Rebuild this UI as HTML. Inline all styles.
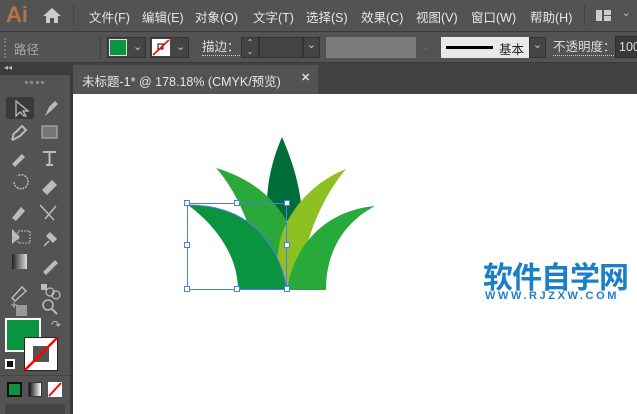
<!DOCTYPE html><html><head><meta charset="utf-8"><style>
*{margin:0;padding:0;box-sizing:border-box}
body{width:637px;height:414px;overflow:hidden;background:#535353;font-family:"Liberation Sans","Noto Sans CJK SC",sans-serif;position:relative;color:#ddd}
.a{position:absolute}
.menu span{position:absolute;top:7px;font-size:12.5px;color:#e6e6e6}
</style></head><body>
<div class="a" style="left:0;top:0;width:637px;height:31px;background:#535353"></div>
<div class="a" style="left:6px;top:2px;font-size:22px;font-weight:bold;color:#b5744a">Ai</div>
<svg class="a" style="left:42px;top:6px" width="20" height="18"><path d="M10 2L1 10h3v7h4v-5h4v5h4v-7h3z" fill="#ccc"/></svg>
<div class="a" style="left:73px;top:5px;width:1px;height:20px;background:#444"></div>
<div class="menu"><span style="left:89px">文件(F)</span><span style="left:142px">编辑(E)</span><span style="left:195px">对象(O)</span><span style="left:253px">文字(T)</span><span style="left:306px">选择(S)</span><span style="left:361px">效果(C)</span><span style="left:416px">视图(V)</span><span style="left:471px">窗口(W)</span><span style="left:530px">帮助(H)</span></div>
<div class="a" style="left:584px;top:5px;width:1px;height:20px;background:#444"></div>
<div class="a" style="left:596px;top:10px;width:6px;height:11px;background:#ccc"></div>
<div class="a" style="left:604px;top:10px;width:7px;height:5px;background:#ccc"></div>
<div class="a" style="left:604px;top:16px;width:7px;height:5px;background:#ccc"></div>
<div class="a" style="left:622px;top:8px;font-size:10px;color:#ccc">⌄</div>
<div class="a" style="left:0;top:31px;width:637px;height:1px;background:#3a3a3a"></div>
<div class="a" style="left:4px;top:38px;width:2px;height:20px;border-left:2px dotted #777"></div>
<div class="a" style="left:14px;top:39px;font-size:12.5px;color:#aaa">路径</div>
<div class="a" style="left:100px;top:35px;width:1px;height:24px;background:#444"></div>
<div class="a" style="left:107px;top:37px;width:39px;height:21px;border:1px solid #333;background:#454545"></div>
<div class="a" style="left:109px;top:39px;width:18px;height:17px;background:#0a9440;border:1px solid #ddd"></div>
<div class="a" style="left:133px;top:40px;font-size:11px;color:#ccc">⌄</div>
<div class="a" style="left:150px;top:37px;width:39px;height:21px;border:1px solid #333;background:#454545"></div>
<svg class="a" style="left:152px;top:39px" width="18" height="17"><rect width="18" height="17" fill="#fff"/><rect x="6" y="5" width="5" height="5" fill="none" stroke="#000"/><path d="M1 16L17 1" stroke="red" stroke-width="1.6"/></svg>
<div class="a" style="left:176px;top:40px;font-size:11px;color:#ccc">⌄</div>
<div class="a" style="left:202px;top:39px;font-size:12.5px;color:#ddd;border-bottom:1px dotted #ccc;line-height:16px">描边：</div>
<div class="a" style="left:241px;top:37px;width:18px;height:21px;border:1px solid #333;background:#454545;font-size:8px;color:#ccc;text-align:center;line-height:9px">⌃<br>⌄</div>
<div class="a" style="left:259px;top:37px;width:44px;height:21px;background:#454545;border:1px solid #333"></div>
<div class="a" style="left:303px;top:37px;width:17px;height:21px;background:#454545;border:1px solid #333;font-size:11px;color:#ccc;text-align:center">⌄</div>
<div class="a" style="left:326px;top:37px;width:90px;height:21px;background:#7c7c7c"></div>
<div class="a" style="left:421px;top:40px;font-size:11px;color:#666">⌄</div>
<div class="a" style="left:441px;top:37px;width:88px;height:21px;background:#e9e9e9"></div>
<div class="a" style="left:446px;top:46px;width:47px;height:3px;background:#000"></div>
<div class="a" style="left:499px;top:39px;font-size:12.5px;color:#222">基本</div>
<div class="a" style="left:529px;top:37px;width:17px;height:21px;background:#454545;border:1px solid #333;font-size:11px;color:#ccc;text-align:center">⌄</div>
<div class="a" style="left:553px;top:39px;font-size:12.5px;color:#ddd;border-bottom:1px dotted #ccc;line-height:16px">不透明度：</div>
<div class="a" style="left:615px;top:36px;width:30px;height:22px;background:#3a3a3a;border:1px solid #2e2e2e;font-size:12.5px;color:#ddd;padding:3px 0 0 3px">100</div>
<div class="a" style="left:0;top:62px;width:637px;height:1px;background:#3a3a3a"></div>
<div class="a" style="left:0;top:63px;width:637px;height:31px;background:#424242"></div>
<div class="a" style="left:0;top:63px;width:70px;height:12px;background:#3c3c3c;font-size:8px;color:#bbb;padding-left:4px">◂◂</div>
<div class="a" style="left:0;top:75px;width:70px;height:19px;background:#535353"></div>
<div class="a" style="left:25px;top:81px;width:19px;height:3px;border-top:3px dotted #888"></div>
<div class="a" style="left:70px;top:63px;width:3px;height:351px;background:#3a3a3a"></div>
<div class="a" style="left:73px;top:65px;width:245px;height:29px;background:#535353"></div>
<div class="a" style="left:82px;top:71px;font-size:12.5px;color:#e6e6e6">未标题-1* @ 178.18% (CMYK/预览)</div>
<div class="a" style="left:301px;top:71px;font-size:11px;color:#ddd;font-weight:bold">✕</div>
<div class="a" style="left:73px;top:94px;width:564px;height:320px;background:#fff"></div>
<svg class="a" style="left:0;top:0" width="637" height="414">
<path d="M282 137C292 160 302 190 302 220L268 222C264 190 272 160 282 137Z" fill="#006d3a"/>
<path d="M216 168C250 178 283 200 297 245L282 290L262 290C258 240 240 195 216 168Z" fill="#2aa83a"/>
<path d="M346 169C318 180 290 205 280 240L272 290L297 290C305 240 320 200 346 169Z" fill="#8dc022"/>
<path d="M375 206C330 210 295 240 287 290L326 290C326 250 345 222 375 206Z" fill="#27aa3b"/>
<path d="M188 205C255 205 280 250 287 290L238 290C238 255 215 225 188 205Z" fill="#0a9440"/>
<path d="M188 205C255 205 280 250 287 290" fill="none" stroke="#4a7cf0" stroke-width="1"/>
<rect x="187.5" y="203.5" width="99" height="86" fill="none" stroke="#4a7cf0" stroke-width="1"/>
<g fill="#fff" stroke="#4a7cf0"><rect x="184.5" y="200.5" width="5" height="5"/><rect x="234.5" y="200.5" width="5" height="5"/><rect x="284.5" y="200.5" width="5" height="5"/><rect x="184.5" y="242.5" width="5" height="5"/><rect x="284.5" y="242.5" width="5" height="5"/><rect x="184.5" y="286.5" width="5" height="5"/><rect x="234.5" y="286.5" width="5" height="5"/><rect x="284.5" y="286.5" width="5" height="5"/></g>
</svg>
<div class="a" style="left:483px;top:257px;font-size:30px;font-weight:bold;color:#1a7fc8;letter-spacing:-1px;font-family:'Noto Sans CJK SC',sans-serif;line-height:36px">软件自学网</div>
<div class="a" style="left:485px;top:290px;font-size:11px;font-weight:bold;color:#1a7fc8;letter-spacing:2.6px">WWW.RJZXW.COM</div>
<div class="a" style="left:6px;top:97px;width:28px;height:22px;background:#3a3a3a;border-radius:2px"></div>
<svg class="a" style="left:0;top:94px" width="70" height="320" fill="#bbb" stroke="#bbb">
<path d="M16 7v15l4-4 4 4h2l-3-5h5z" fill="none" stroke-width="1.3"/>
<path d="M45 22l4-9 6-6 3 3-6 6z" stroke="none"/>
<path d="M12 46c2-4 0-6 4-8l6-6 4 4-6 6c-3 1-4 3-8 4" fill="none" stroke-width="2"/>
<rect x="42" y="32" width="15" height="12" fill="#777" stroke-width="1"/>
<path d="M12 70l10-10 3 3-10 10z" stroke="none"/>
<path d="M43 58h13M49.5 58v13M46 71h7" fill="none" stroke-width="2"/>
<path d="M14 88a7 7 0 1 0 3-6" fill="none" stroke-width="1.5" stroke-dasharray="2 1"/>
<path d="M42 96l10-10 5 5-10 10z" stroke="none"/>
<path d="M12 124l9-11 4 4-9 10z" stroke="none"/>
<path d="M40 111l14 15M45 125l11-13" fill="none" stroke-width="1.5"/>
<path d="M12 135v15l8-7z" stroke="none"/><rect x="18" y="137" width="12" height="12" fill="none" stroke-dasharray="2 1"/>
<path d="M44 152l5-5M47 142l6 6 3-3-6-6z" stroke-width="1.5"/>
<defs><linearGradient id="g"><stop offset="0" stop-color="#222"/><stop offset="1" stop-color="#ddd"/></linearGradient></defs>
<rect x="12" y="160" width="15" height="15" fill="url(#g)" stroke="none"/>
<path d="M43 178l12-12 3 3-12 12z" stroke="none"/>
<path d="M12 204l10-11 4 4-11 10z" fill="none" stroke-width="1.5"/>
<rect x="41" y="190" width="6" height="6" stroke="none"/><circle cx="50" cy="198" r="4" fill="none" stroke-width="1.3"/><circle cx="56" cy="201" r="4" fill="none" stroke-width="1.3"/>
<path d="M11 211h6M14 208v6" fill="none" stroke-width="1"/><rect x="16" y="211" width="11" height="11" fill="#999" stroke="none"/>
<circle cx="48" cy="211" r="5" fill="none" stroke-width="1.5"/><path d="M52 215l5 5" stroke-width="2"/>
</svg>
<div class="a" style="left:5px;top:318px;width:36px;height:34px;background:#0a9440;border:2px solid #fff"></div>
<div class="a" style="left:51px;top:318px;font-size:12px;color:#bbb">↷</div>
<div class="a" style="left:24px;top:337px;width:34px;height:34px;background:#fff;border:1px solid #222"></div>
<div class="a" style="left:33px;top:346px;width:16px;height:16px;background:#535353"></div>
<svg class="a" style="left:24px;top:337px" width="34" height="34"><path d="M1 33L33 1" stroke="red" stroke-width="2.5"/></svg>
<div class="a" style="left:5px;top:359px;width:10px;height:10px;border:2px solid #fff;background:#111"></div>
<div class="a" style="left:0;top:375px;width:70px;height:1px;background:#444"></div>
<div class="a" style="left:7px;top:382px;width:15px;height:15px;background:#0a9440;border:2px solid #111"></div>
<div class="a" style="left:28px;top:382px;width:14px;height:15px;background:linear-gradient(90deg,#111,#fff);border:1px solid #333"></div>
<svg class="a" style="left:48px;top:382px" width="14" height="15"><rect width="14" height="15" fill="#fff"/><path d="M1 14L13 1" stroke="red" stroke-width="2"/></svg>
<div class="a" style="left:5px;top:404px;width:60px;height:10px;background:#444"></div>
</body></html>
